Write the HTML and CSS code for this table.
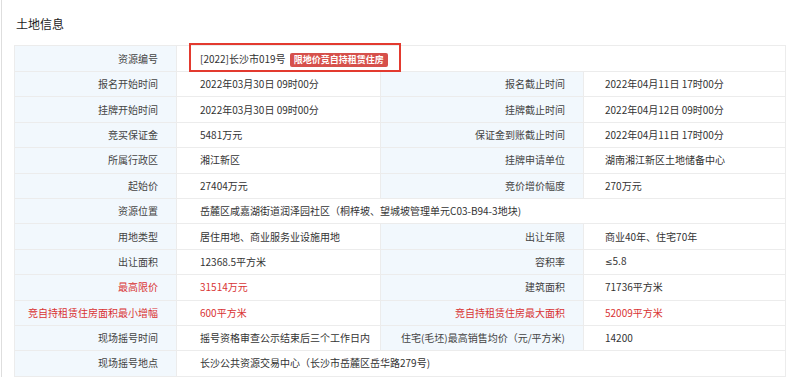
FILE: index.html
```html
<!DOCTYPE html>
<html lang="zh-CN">
<head>
<meta charset="utf-8">
<title>土地信息</title>
<link rel="stylesheet" href="styles.css">
</head>
<body>
<div class="page">
  <h2 class="title">土地信息</h2>
  <div class="table-wrap">
    <table class="info">
      <colgroup>
        <col class="c1"><col class="c2"><col class="c3"><col class="c4">
      </colgroup>
      <tr>
        <td class="lbl">资源编号</td>
        <td class="val" colspan="3">[2022]长沙市019号<span class="badge">限地价竞自持租赁住房</span></td>
      </tr>
      <tr>
        <td class="lbl">报名开始时间</td><td class="val">2022年03月30日 09时00分</td>
        <td class="lbl">报名截止时间</td><td class="val">2022年04月11日 17时00分</td>
      </tr>
      <tr>
        <td class="lbl">挂牌开始时间</td><td class="val">2022年03月30日 09时00分</td>
        <td class="lbl">挂牌截止时间</td><td class="val">2022年04月12日 09时00分</td>
      </tr>
      <tr>
        <td class="lbl">竞买保证金</td><td class="val">5481万元</td>
        <td class="lbl">保证金到账截止时间</td><td class="val">2022年04月11日 17时00分</td>
      </tr>
      <tr>
        <td class="lbl">所属行政区</td><td class="val">湘江新区</td>
        <td class="lbl">挂牌申请单位</td><td class="val">湖南湘江新区土地储备中心</td>
      </tr>
      <tr>
        <td class="lbl">起始价</td><td class="val">27404万元</td>
        <td class="lbl">竞价增价幅度</td><td class="val">270万元</td>
      </tr>
      <tr>
        <td class="lbl">资源位置</td>
        <td class="val" colspan="3">岳麓区咸嘉湖街道润泽园社区（桐梓坡、望城坡管理单元C03-B94-3地块)</td>
      </tr>
      <tr>
        <td class="lbl">用地类型</td><td class="val">居住用地、商业服务业设施用地</td>
        <td class="lbl">出让年限</td><td class="val">商业40年、住宅70年</td>
      </tr>
      <tr>
        <td class="lbl">出让面积</td><td class="val">12368.5平方米</td>
        <td class="lbl">容积率</td><td class="val"><span class="sym">≤</span>5.8</td>
      </tr>
      <tr class="red">
        <td class="lbl">最高限价</td><td class="val">31514万元</td>
        <td class="lbl plain">建筑面积</td><td class="val plain">71736平方米</td>
      </tr>
      <tr class="red">
        <td class="lbl">竞自持租赁住房面积最小增幅</td><td class="val">600平方米</td>
        <td class="lbl">竞自持租赁住房最大面积</td><td class="val">52009平方米</td>
      </tr>
      <tr>
        <td class="lbl">现场摇号时间</td><td class="val">摇号资格审查公示结束后三个工作日内</td>
        <td class="lbl">住宅(毛坯)最高销售均价（元/平方米)</td><td class="val">14200</td>
      </tr>
      <tr>
        <td class="lbl">现场摇号地点</td>
        <td class="val" colspan="3">长沙公共资源交易中心（长沙市岳麓区岳华路279号)</td>
      </tr>
    </table>
    <div class="mark"></div>
  </div>
</div>
</body>
</html>
```

FILE: styles.css
```css
html, body {
  margin: 0;
  padding: 0;
  background: #fff;
}

body {
  font-family: "Microsoft YaHei", "Noto Sans CJK SC", sans-serif;
  color: #333;
}

.page {
  margin-left: 1px;
  border-left: 1px solid #dedede;
  padding: 16px 0 0 12px;
  min-height: 400px;
}

.title {
  margin: 0 0 13px 2px;
  font-size: 12px;
  line-height: 16px;
  font-weight: normal;
  color: #222;
}

.table-wrap {
  position: relative;
  width: 771px;
}

.info {
  width: 771px;
  border-collapse: collapse;
  table-layout: fixed;
  font-size: 10px;
}

.c1 { width: 162px; }
.c2 { width: 204px; }
.c3 { width: 203px; }
.c4 { width: 202px; }

.info td {
  border: 1px solid #ececec;
  height: 25.4px;
  box-sizing: border-box;
  padding: 0;
  line-height: 14px;
  white-space: nowrap;
  vertical-align: middle;
}

.info tr:first-child td {
  height: 26px;
  padding-top: 1px;
}

.lbl {
  background: #f2f8fd;
  text-align: right;
  padding-right: 18px !important;
  color: #444;
}

.val {
  background: #fff;
  padding-left: 23px !important;
  color: #333;
}

.info td:nth-child(4) {
  padding-left: 21px !important;
}

.red .lbl, .red .val {
  color: #d93333;
}

.red .plain {
  color: #333;
}

.red .lbl.plain {
  color: #444;
}

.sym {
  font-family: "DejaVu Sans", sans-serif;
  font-size: 9px;
}

.badge {
  display: inline-block;
  margin-left: 4px;
  padding: 0 4px;
  height: 14px;
  line-height: 14px;
  background: #d6504b;
  color: #fff;
  font-size: 9px;
  font-weight: bold;
  border-radius: 2px;
  vertical-align: 0;
}

.mark {
  position: absolute;
  left: 175px;
  top: -2px;
  width: 212px;
  height: 29px;
  box-sizing: border-box;
  border: 2px solid #e33a2f;
  pointer-events: none;
}
```
